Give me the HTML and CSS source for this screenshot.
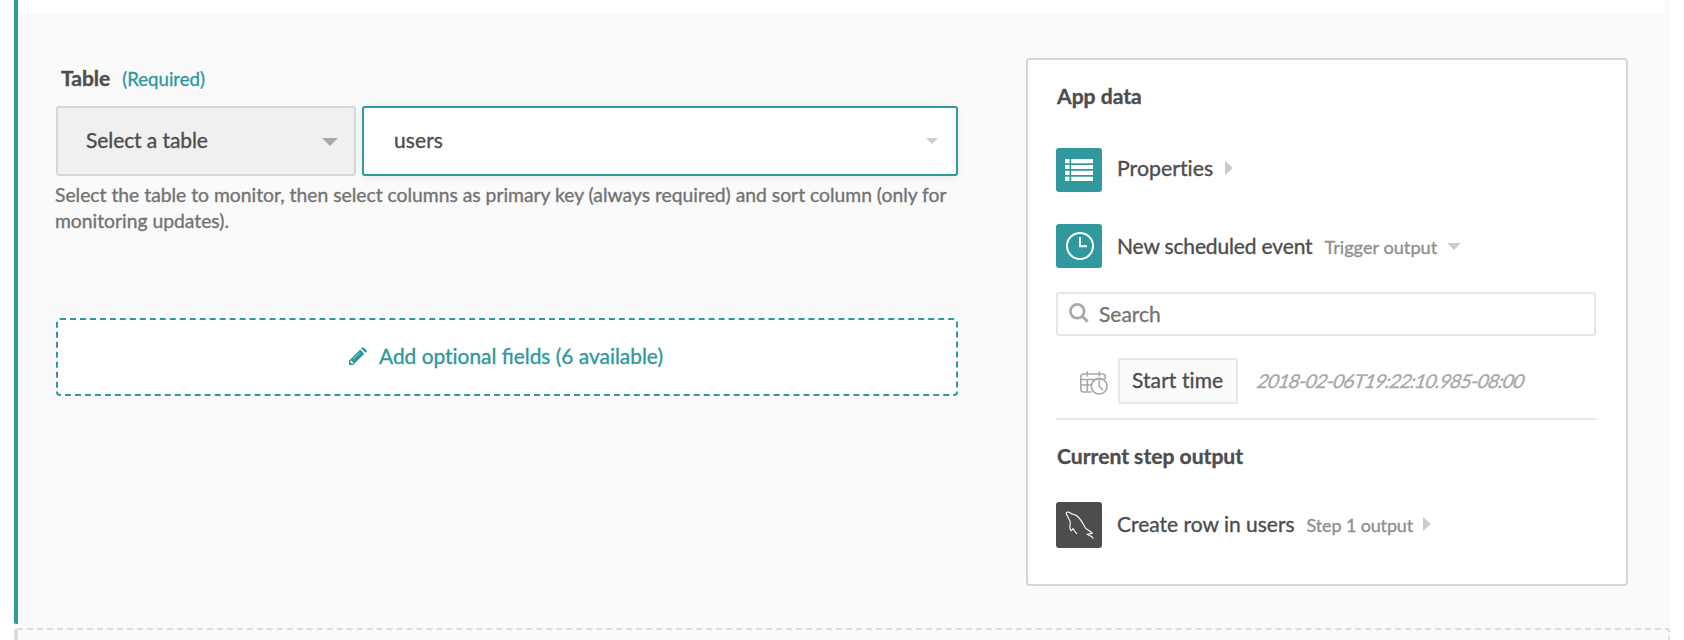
FILE: index.html
```html
<!DOCTYPE html>
<html lang="en">
<head>
<meta charset="utf-8">
<title>Recipe step</title>
<link rel="stylesheet" href="styles.css">
</head>
<body>
<main class="page">
  <section class="step">
    <div class="step-top"></div>
    <div class="step-body">
      <form class="config">
        <div class="label-row"><label class="label">Table</label><span class="required">(Required)</span></div>
        <div class="selects">
          <div class="select select-mode"><span class="mode-text">Select a table</span><i class="caret caret-dark"></i></div>
          <div class="select select-value"><span class="value-text">users</span><i class="caret caret-small"></i></div>
        </div>
        <p class="help">Select the table to monitor, then select columns as primary key (always required) and sort column (only for<br>monitoring updates).</p>
        <div class="optional">
          <svg class="pencil" viewBox="0 0 18 18"><path d="M11.2 2.6 15.4 6.8 5.6 16.6 4.2 18H0V13.8Z" fill="#2f999e"/><path d="M12.2 1.6 13.3.5Q14 0 14.7.5L17.5 3.3Q18 4 17.5 4.7L16.4 5.8Z" fill="#2f999e"/><path d="M1.5 14.5V16H2.6V16.8H3.8L4.6 16 2.2 13.6Z" fill="#fff"/><path d="M4.2 12.2 10.6 5.8" stroke="#9bd0d2" stroke-width="1"/></svg>
          <span class="optional-text">Add <span class="plain">optional</span> fields (6 available)</span>
        </div>
      </form>
      <aside class="card">
        <h2 class="heading">App data</h2>
        <div class="row row-props">
          <span class="tile"><svg width="28" height="22" viewBox="0 0 28 22" fill="#fff"><path d="M0 0H4.5V4.3H0ZM6.2 0H28V4.3H6.2ZM0 6H4.5V10H0ZM6.2 6H28V10H6.2ZM0 11.7H4.5V16H0ZM6.2 11.7H28V16H6.2ZM0 17.7H4.5V22H0ZM6.2 17.7H28V22H6.2Z"/></svg></span>
          <span class="name name-props">Properties</span><i class="caret-right caret-props"></i>
        </div>
        <div class="row row-event">
          <span class="tile tile-clock"><svg width="28" height="28" viewBox="0 0 28 28" fill="none" stroke="#fff" stroke-width="2"><circle cx="14" cy="14" r="13"/><path d="M14 5V14.2H21"/></svg></span>
          <span class="name name-event">New scheduled event</span><span class="sub sub-event">Trigger output</span><i class="caret caret-event"></i>
        </div>
        <div class="search"><svg width="20" height="20" viewBox="0 0 20 20" fill="none" stroke="#a9a9a9"><circle cx="8.3" cy="8.3" r="6.9" stroke-width="2.7"/><path d="M13.2 13.2 18.6 18.6" stroke-width="3"/></svg><span>Search</span></div>
        <div class="datum">
          <svg class="datum-icon" width="28" height="24" viewBox="0 0 28 24" fill="none" stroke="#a9a9a9" stroke-width="1.6"><path d="M12 21H3.5Q.8 21 .8 18.3V5.7Q.8 3 3.5 3H22.5Q25.3 3 25.3 5.7V8M.8 8.5H25M.8 14H12M7.3 8.5V21M13.3 8.5V11M7.3.3V5.5M19.3.3V5.5"/><circle cx="19.2" cy="15.2" r="7.8"/><path d="M19.2 9.8V15.2L23 19"/></svg>
          <span class="pill">Start time</span><span class="value">2018-02-06T19:22:10.985-08:00</span>
        </div>
        <h2 class="heading heading-output">Current step output</h2>
        <div class="row row-mysql">
          <span class="tile tile-dark"><svg width="30" height="28" viewBox="-1 0 30 28" fill="none" stroke="#fff" stroke-width="1.1" stroke-linejoin="round"><path d="M28.3 27.6 26.5 25.4 22 23.2 27.3 22.4C25.5 19.8 22 18.8 20.5 17.2 18.5 13.5 16.5 8.5 12 5 9.5 3.2 7.5 3.4 6 2.5 4 .7 1.7.6 1.2 2 1 3.5 2.5 4.5 3 6 3.3 7.8 5 9.3 5.2 11 5.3 12.5 4.8 14.5 5 17 5.3 19 6 20.2 6.5 19.5L8 17.5 9.5 20 12 23"/></svg></span>
          <span class="name name-mysql">Create row in users</span><span class="sub sub-step">Step 1 output</span><i class="caret-right caret-step"></i>
        </div>
      </aside>
    </div>
  </section>
  <section class="next-step"></section>
</main>
</body>
</html>
```
FILE: styles.css
```css
* { box-sizing: border-box; }
body { margin: 0; background: #fff; color: #4d4d4d; font: 21px/24px Lato, sans-serif; -webkit-text-stroke: .35px; }
.page { width: 1656px; height: 640px; margin-left: 14px; overflow: hidden; background: #fafafa; }
.step { height: 624px; margin-bottom: 4px; border-left: 4px solid #2f999e; border-bottom-left-radius: 2px; }
.step-top { width: 1646px; height: 14px; background: #fff; }
.step-body { display: flex; align-items: flex-start; padding: 44px 42px 0 38px; }
.config { width: 902px; margin-right: 68px; padding-top: 8px; }
.label-row { display: flex; align-items: baseline; height: 24px; padding-left: 5px; }
.label { font-weight: 700; }
.required { margin-left: 12px; color: #2f999e; font-size: 18.6px; }
.selects { display: flex; gap: 6px; margin-top: 16px; }
.select { display: flex; align-items: center; justify-content: space-between; height: 70px; border: 2px solid #d6d6d6; border-radius: 3px; }
.select-mode { width: 300px; padding: 0 16px 2px 28px; background: #f0f0f0; }
.select-value { width: 596px; padding: 0 18px 2px 30px; background: #fff; border-color: #2f999e; box-shadow: 0 2px 10px rgba(0, 0, 0, .07); }
.mode-text { letter-spacing: -.08px; }
.value-text { letter-spacing: .1px; }
.name-event { letter-spacing: -.15px; }
.plain, .name, .pill { font-variant-ligatures: none; }
.caret { border: 8px solid transparent; border-top-color: #a9a9a9; border-bottom: 0; }
.caret-dark { margin-top: 3px; }
.caret-small { border-width: 6px; border-bottom: 0; border-top-color: #ccc; margin-top: 2px; }
.caret-event { border-width: 7px; border-bottom: 0; border-top-color: #ccc; margin-left: 10px; }
.caret-right { border: 7px solid transparent; border-left: 8px solid #ccc; border-right: 0; margin-left: 12px; }
.caret-props { margin-bottom: 4px; }
.caret-step { margin-left: 10px; margin-bottom: 2px; }
.help { margin: 6px 0 0 -1px; color: #737373; font-size: 19.31px; line-height: 26px; white-space: nowrap; }
.optional { display: flex; align-items: center; justify-content: center; gap: 12px; height: 78px; margin-top: 84px; padding: 0 2px 2px 0; border: 2px dashed #2f999e; border-radius: 4px; background: #fff; color: #2f999e; }
.optional-text { font-size: 20.9px; }
.pencil { width: 18px; height: 18px; }
.card { width: 602px; height: 528px; padding: 24px 30px 0 28px; border: 2px solid #d6d6d6; border-radius: 4px; background: #fff; }
.heading { margin: 0; padding-left: 1px; font-size: 21.1px; line-height: 24px; font-weight: 700; }
.row { display: flex; align-items: center; white-space: nowrap; }
.row-props { margin-top: 40px; }
.row-event { margin-top: 32px; }
.name-props { padding-bottom: 4px; font-size: 21.3px; }
.name-mysql { padding-bottom: 2px; }
.tile { display: flex; align-items: center; justify-content: center; width: 46px; height: 44px; margin-right: 15px; border-radius: 3px; background: #2f999e; }
.tile-clock { padding-left: 2px; }
.tile-dark { height: 46px; background: #4d4d4d; }
.sub { margin-left: 12px; color: #8f8f8f; font-size: 18px; }
.sub-event { padding-top: 1px; font-size: 18.2px; }
.sub-step { letter-spacing: -.14px; }
.search { display: flex; align-items: center; gap: 10px; height: 44px; margin-top: 24px; padding-left: 11px; border: 2px solid #e6e6e6; border-radius: 3px; color: #757575; }
.search svg { margin-bottom: 2px; }
.datum { display: flex; align-items: center; height: 84px; padding: 0 0 0 24px; border-bottom: 2px solid #e6e6e6; }
.datum-icon { margin-top: 12px; }
.pill { width: 120px; height: 46px; margin: 8px 20px 0 10px; padding: 8px 0 0 12px; border: 2px solid #e6e6e6; border-radius: 3px; background: #fafafa; white-space: nowrap; letter-spacing: .08px; }
.value { margin-top: 8px; color: #a9a9a9; font-size: 19px; letter-spacing: -.56px; transform: skewX(-18deg); }
.heading-output { margin-top: 24px; }
.row-mysql { margin-top: 34px; }
.next-step { height: 12px; border: 2px dashed #ddd; border-left: 4px solid #ddd; border-bottom: 0; border-radius: 3px 3px 0 0; }
```
